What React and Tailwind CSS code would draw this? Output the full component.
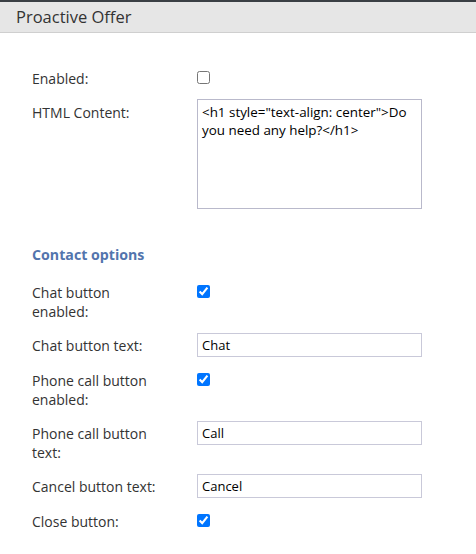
import React from "react";

const font = { fontFamily: '"Open Sans", "Liberation Sans", sans-serif' };

const CheckRow = ({ label, checked, className = "" }) => (
  <div className={`flex items-start ${className}`}>
    <div className="w-[197px] pl-[32px] shrink-0">
      <div className="w-[132px] text-[14px] leading-[19px] text-[#333]">{label}</div>
    </div>
    <input
      type="checkbox"
      defaultChecked={checked}
      className="mt-[2px] w-[13px] h-[13px]"
    />
  </div>
);

const TextRow = ({ label, value, className = "" }) => (
  <div className={`flex items-start ${className}`}>
    <div className="w-[197px] pl-[32px] shrink-0 pt-[3px]">
      <div className="w-[132px] text-[14px] leading-[19px] text-[#333]">{label}</div>
    </div>
    <input
      type="text"
      defaultValue={value}
      className="w-[225px] h-[24px] border border-[#c9c9d9] px-[4px] text-[13px] text-black outline-none"
      style={font}
    />
  </div>
);

export default function App() {
  return (
    <div className="w-[476px] h-[554px] bg-white overflow-hidden" style={font}>
      {/* Header bar */}
      <div className="h-[2px] bg-[#3a3f44]" />
      <div className="h-[31px] bg-[#e6e6e6] border-b border-[#cfcfcf] flex items-center pl-[16px]">
        <span className="text-[16.5px] text-[#333]">Proactive Offer</span>
      </div>

      <div className="pt-[35px]">
        <CheckRow label="Enabled:" checked={false} className="pt-[1px]" />

        <div className="flex items-start mt-[11px]">
          <div className="w-[197px] pl-[32px] shrink-0 pt-[4px]">
            <div className="text-[14px] leading-[19px] text-[#333]">HTML Content:</div>
          </div>
          <textarea
            defaultValue={'<h1 style="text-align: center">Do you need any help?</h1>'}
            className="w-[225px] h-[110px] border border-[#b9b9cb] px-[4px] py-[3px] text-[13.4px] leading-[18px] text-black resize-none outline-none"
            style={font}
          />
        </div>

        {/* Contact options */}
        <div className="pl-[32px] mt-[36px] text-[14.2px] leading-[20px] font-bold text-[#5274ad]">
          Contact options
        </div>

        <CheckRow label="Chat button enabled:" checked className="mt-[18px]" />
        <TextRow label="Chat button text:" value="Chat" className="mt-[12px]" />
        <CheckRow label="Phone call button enabled:" checked className="mt-[14px]" />
        <TextRow label="Phone call button text:" value="Call" className="mt-[12px]" />
        <TextRow label="Cancel button text:" value="Cancel" className="mt-[12px]" />
        <CheckRow label="Close button:" checked className="mt-[14px]" />
      </div>
    </div>
  );
}
